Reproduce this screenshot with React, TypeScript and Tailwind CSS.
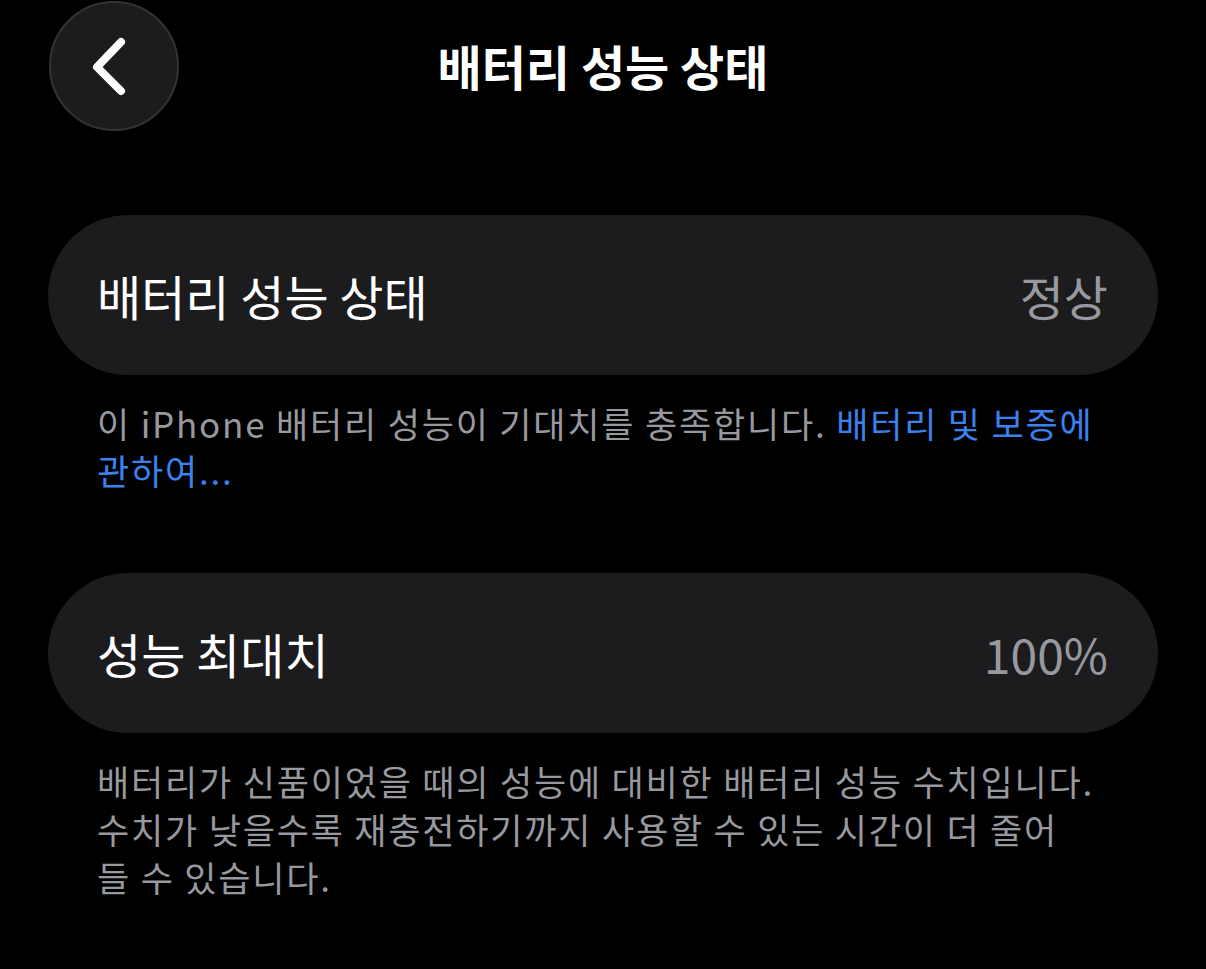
import React from "react";

const font = { fontFamily: '"Noto Sans CJK KR", "Noto Sans", sans-serif' };

function Row({ label, value }: { label: string; value: string }) {
  return (
    <div className="flex items-center justify-between h-[160px] rounded-full bg-[#1c1c1e] pl-[49px] pr-[50px]">
      <span className="text-[48px] text-white">{label}</span>
      <span className="text-[48px] text-[#98989f]">{value}</span>
    </div>
  );
}

export default function App() {
  return (
    <div className="min-h-[969px] w-[1206px] bg-black text-white" style={font}>
      {/* header */}
      <div className="relative flex items-center justify-center h-[132px]">
        <button className="absolute left-[49px] top-[1px] flex items-center justify-center w-[130px] h-[130px] rounded-full bg-[#1c1c1e] border-2 border-[#333335]">
          <svg width="40" height="60" viewBox="0 0 40 60" fill="none" className="mr-[10px]">
            <path d="M32 6 L8 31 L32 55" stroke="white" strokeWidth="8" strokeLinecap="round" strokeLinejoin="round" />
          </svg>
        </button>
        <h1 className="text-[48px] font-bold -mt-[3px]">배터리 성능 상태</h1>
      </div>

      <div className="px-[48px] pt-[83px]">
        <Row label="배터리 성능 상태" value="정상" />
        <p className="px-[49px] pt-[24px] text-[35px] tracking-[1.8px] leading-[47px] text-[#98989f]">
          이 iPhone 배터리 성능이 기대치를 충족합니다.{" "}
          <span className="text-[#3b82ee]">
            배터리 및 보증에
            <br />
            관하여...
          </span>
        </p>

        <div className="mt-[80px]">
          <Row label="성능 최대치" value="100%" />
        </div>
        <p className="px-[49px] pt-[24px] text-[35px] tracking-[1.8px] leading-[48px] text-[#98989f]">
          배터리가 신품이었을 때의 성능에 대비한 배터리 성능 수치입니다.
          <br />
          수치가 낮을수록 재충전하기까지 사용할 수 있는 시간이 더 줄어
          <br />
          들 수 있습니다.
        </p>
      </div>
    </div>
  );
}
